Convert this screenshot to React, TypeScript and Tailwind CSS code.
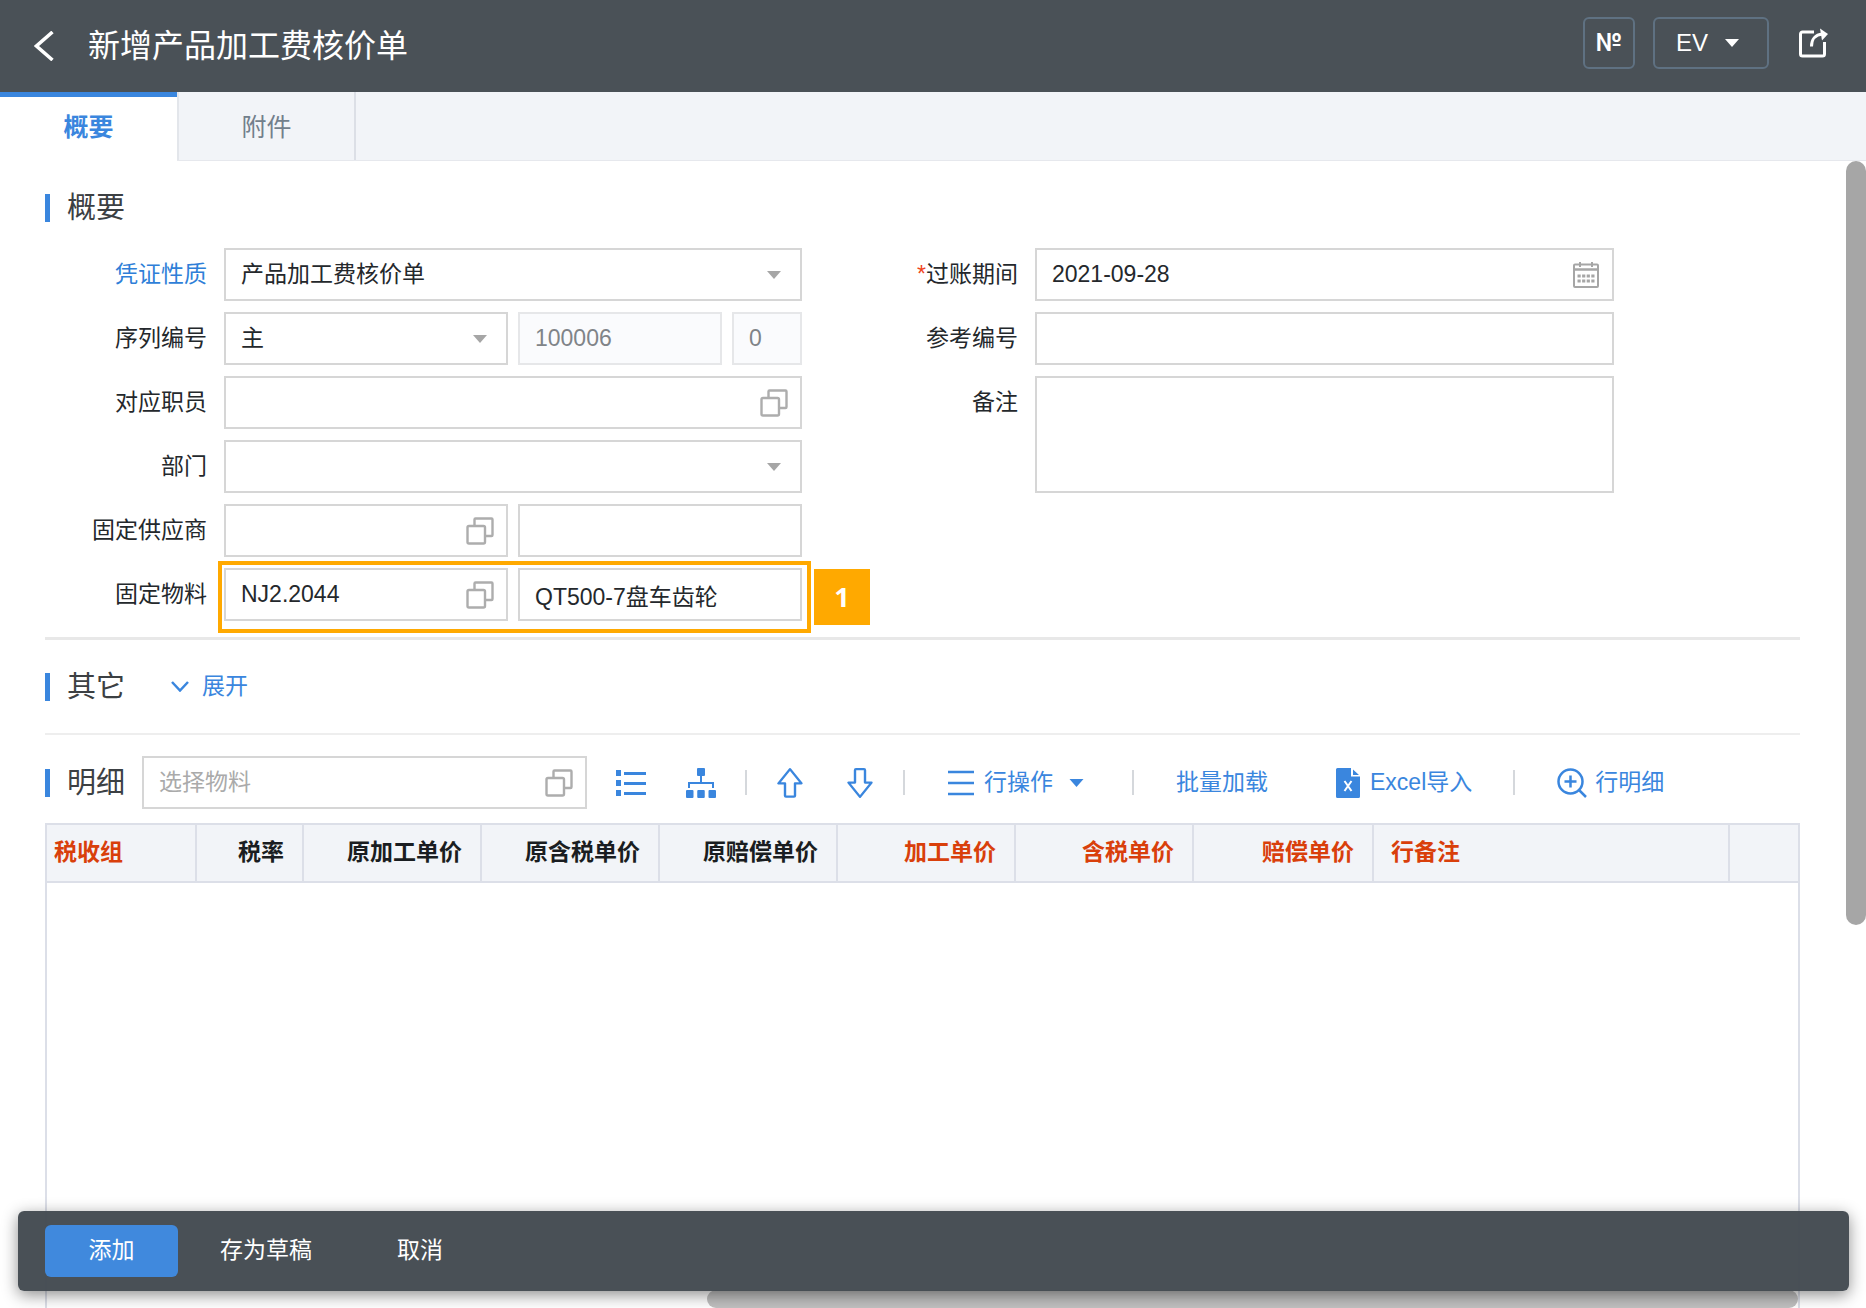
import type { InputHTMLAttributes, ReactNode, SelectHTMLAttributes } from "react";

interface IColumn {
  titulo: string;
  width: string;
  align: string;
  color: string;
}

const columns: IColumn[] = [
  { titulo: "税收组", width: "w-[149px]", align: "text-left pl-[7px]", color: "text-[#d93f0b]" },
  { titulo: "税率", width: "w-[107px]", align: "text-right pr-[18px]", color: "text-[#1a1d21]" },
  { titulo: "原加工单价", width: "w-[178px]", align: "text-right pr-[18px]", color: "text-[#1a1d21]" },
  { titulo: "原含税单价", width: "w-[178px]", align: "text-right pr-[18px]", color: "text-[#1a1d21]" },
  { titulo: "原赔偿单价", width: "w-[178px]", align: "text-right pr-[18px]", color: "text-[#1a1d21]" },
  { titulo: "加工单价", width: "w-[178px]", align: "text-right pr-[18px]", color: "text-[#d93f0b]" },
  { titulo: "含税单价", width: "w-[178px]", align: "text-right pr-[18px]", color: "text-[#d93f0b]" },
  { titulo: "赔偿单价", width: "w-[180px]", align: "text-right pr-[18px]", color: "text-[#d93f0b]" },
  { titulo: "行备注", width: "w-[356px]", align: "text-left pl-[17px]", color: "text-[#d93f0b]" },
  { titulo: "", width: "", align: "", color: "" },
];

const Caret = ({ className }: { className: string }) => (
  <svg viewBox="0 0 14 8" className={className} aria-hidden="true">
    <path d="M0 0h14L7 8z" fill="currentColor" />
  </svg>
);

const PopupIcon = () => (
  <svg viewBox="0 0 28 28" className="size-7" fill="none" stroke="#adadad" strokeWidth="2.4" aria-hidden="true">
    <path d="M8.500 9V2.500a1 1 0 0 1 1-1h16a1 1 0 0 1 1 1V18a1 1 0 0 1-1 1h-6" />
    <rect x="1.500" y="9" width="17.500" height="17.500" rx="1.500" />
  </svg>
);

const CalendarIcon = () => (
  <svg viewBox="0 0 28 28" className="size-7" fill="none" stroke="#a6a6a6" strokeWidth="2" aria-hidden="true">
    <rect x="2" y="3.500" width="24" height="22.500" rx="1" />
    <path d="M2 8.500h24" strokeWidth="2.500" />
    <path d="M8 1v5M20 1v5" />
    <path d="M5.500 15h17M5.500 20h17" strokeWidth="3" strokeDasharray="3.200 1.400" />
  </svg>
);

const Field = ({ label, id, link, required, children }: {
  label: string;
  id: string;
  link?: boolean;
  required?: boolean;
  children: ReactNode;
}) => (
  <div className="flex items-start">
    <label
      htmlFor={id}
      className={`w-[162px] shrink-0 pr-[17px] text-right leading-[52px] ${link ? "text-[#2f7fd8]" : ""}`}
    >
      {required && <span className="text-[#f0441c]">*</span>}
      {label}
    </label>
    <div className="relative flex min-w-0 flex-1 gap-[10px]">{children}</div>
  </div>
);

const TextField = ({ icon, className = "flex-1", ...props }: InputHTMLAttributes<HTMLInputElement> & { icon?: ReactNode }) => (
  <div className={`relative min-w-0 ${className}`}>
    <input
      {...props}
      className="h-[53px] w-full border-2 border-[#d6d6d6] bg-white px-[15px] outline-none placeholder:text-[#aaaaaa] disabled:border-[#e6e7e9] disabled:bg-[#fafbfd] disabled:text-[#808488]"
    />
    {icon && <span className="pointer-events-none absolute inset-y-0 right-[14px] flex items-center">{icon}</span>}
  </div>
);

const SelectField = ({ children, ...props }: SelectHTMLAttributes<HTMLSelectElement>) => (
  <div className="relative min-w-0 flex-1">
    <select
      {...props}
      className="h-[53px] w-full appearance-none border-2 border-[#d6d6d6] bg-white px-[15px] outline-none"
    >
      {children}
    </select>
    <span className="pointer-events-none absolute inset-y-0 right-[21px] flex items-center text-[#a6a6a6]">
      <Caret className="h-2 w-[14px]" />
    </span>
  </div>
);

const SectionTitle = ({ children }: { children: ReactNode }) => (
  <div className="flex items-center gap-[17px]">
    <span className="h-7 w-[5px] bg-[#3a86de]" />
    <h2 className="text-[29px] leading-9 text-[#3c4043]">{children}</h2>
  </div>
);

const Separator = () => <span className="h-[25px] w-[2px] bg-[#d5d8dc]" />;

const Header = () => (
  <header className="flex h-[92px] shrink-0 items-center bg-[#4a5157] pr-[38px] pl-[34px] text-white">
    <button type="button" aria-label="返回">
      <svg viewBox="0 0 20 30" className="h-[30px] w-5" fill="none" stroke="currentColor" strokeWidth="3.500">
        <path d="M18.500 1L2.500 15l16 14" />
      </svg>
    </button>
    <h1 className="ml-[34px] flex-1 text-[32px] leading-10">新增产品加工费核价单</h1>
    <div className="flex items-center pb-[6px]">
      <button
        type="button"
        className="size-[52px] rounded-md border-2 border-[#5f7182] font-['Inter',sans-serif] text-[24px] font-bold"
      >
        №
      </button>
      <button
        type="button"
        className="ml-[18px] flex h-[52px] w-[116px] items-center gap-4 rounded-md border-2 border-[#5f7182] pl-[21px] text-[24px]"
      >
        EV
        <Caret className="h-2 w-4" />
      </button>
      <button type="button" aria-label="分享" className="ml-[29px]">
        <svg viewBox="0 0 30 30" className="size-[30px]" fill="none" stroke="currentColor" strokeWidth="3" aria-hidden="true">
          <path d="M16 4H4.500a2 2 0 0 0-2 2v20a2 2 0 0 0 2 2h20a2 2 0 0 0 2-2V14" />
          <path d="M13.500 18.500c0-6.500 3.500-12 11-12.500" />
          <path d="M22 .5l8 5.500-6 6.500z" fill="currentColor" stroke="none" />
        </svg>
      </button>
    </div>
  </header>
);

const Tabs = () => (
  <nav className="flex h-[69px] shrink-0 border-b border-[#e6e8ed] bg-[#f2f4f8] text-[25px]">
    <button
      type="button"
      className="-mb-px w-[177px] border-t-[5px] border-[#3a86de] bg-white pb-[2px] font-bold text-[#3a86de]"
    >
      概要
    </button>
    <button type="button" className="w-[179px] border-x-2 border-l-[#e3e6eb] border-r-[#dcdfe6] pt-1 text-[#727f8c]">
      附件
    </button>
  </nav>
);

const Overview = () => (
  <section className="pt-[29px]">
    <SectionTitle>概要</SectionTitle>
    <div className="mt-[22px] flex gap-[71px]">
      <div className="ml-[17px] flex w-[740px] flex-col gap-[11px]">
        <Field label="凭证性质" id="tipo" link>
          <SelectField id="tipo">
            <option>产品加工费核价单</option>
          </SelectField>
        </Field>
        <Field label="序列编号" id="serie">
          <div className="flex w-[284px]">
            <SelectField id="serie">
              <option>主</option>
            </SelectField>
          </div>
          <TextField aria-label="编号" defaultValue="100006" disabled />
          <TextField aria-label="版本" defaultValue="0" disabled className="w-[70px]" />
        </Field>
        <Field label="对应职员" id="empleado">
          <TextField id="empleado" icon={<PopupIcon />} />
        </Field>
        <Field label="部门" id="departamento">
          <SelectField id="departamento" />
        </Field>
        <Field label="固定供应商" id="proveedor">
          <TextField id="proveedor" icon={<PopupIcon />} />
          <TextField aria-label="供应商名称" />
        </Field>
        <Field label="固定物料" id="material">
          <TextField id="material" defaultValue="NJ2.2044" icon={<PopupIcon />} />
          <TextField aria-label="物料名称" defaultValue="QT500-7盘车齿轮" />
          <div className="pointer-events-none absolute -top-[7px] -right-[9px] -bottom-[12px] -left-[6px] border-4 border-[#ffa900]" />
          <span className="absolute top-px left-full ml-3 flex size-14 items-center justify-center bg-[#ffa900] font-['Open_Sans','Noto_Sans',sans-serif] text-[27px] font-bold text-white">
            1
          </span>
        </Field>
      </div>
      <div className="flex w-[741px] flex-col gap-[11px]">
        <Field label="过账期间" id="fecha" required>
          <TextField id="fecha" defaultValue="2021-09-28" icon={<CalendarIcon />} />
        </Field>
        <Field label="参考编号" id="referencia">
          <TextField id="referencia" />
        </Field>
        <Field label="备注" id="notas">
          <textarea id="notas" className="h-[117px] flex-1 resize-none border-2 border-[#d6d6d6] px-[15px] outline-none" />
        </Field>
      </div>
    </div>
  </section>
);

const Toolbar = () => (
  <div className="flex items-center text-[#3a86de]">
    <button type="button" aria-label="列表" className="ml-[29px]">
      <svg viewBox="0 0 30 26" className="h-[26px] w-[30px]" fill="currentColor" aria-hidden="true">
        <path d="M0 0h5v6H0zM0 10h5v6H0zM0 20h5v6H0zM8 2h22v3H8zM8 12h22v3H8zM8 22h22v3H8z" />
      </svg>
    </button>
    <button type="button" aria-label="层级" className="mr-[29px] ml-10">
      <svg viewBox="0 0 30 30" className="size-[30px]" fill="currentColor" aria-hidden="true">
        <rect x="11" y="0" width="8" height="8" rx="1" />
        <rect x="0" y="22" width="7.500" height="8" rx="1" />
        <rect x="11.250" y="22" width="7.500" height="8" rx="1" />
        <rect x="22.500" y="22" width="7.500" height="8" rx="1" />
        <path d="M3 20v-5h24v5M15 7v8" fill="none" stroke="currentColor" strokeWidth="2" />
      </svg>
    </button>
    <Separator />
    <button type="button" aria-label="上移" className="ml-[30px]">
      <svg viewBox="0 0 26 36" className="h-9 w-[26px]" fill="none" stroke="currentColor" strokeWidth="2.400" strokeLinejoin="round" aria-hidden="true">
        <path d="M13 2.500L1.500 18H8v13.500a1 1 0 0 0 1 1h8a1 1 0 0 0 1-1V18h6.500z" transform="translate(0 1.800) scale(1 .92)" />
      </svg>
    </button>
    <button type="button" aria-label="下移" className="mr-[30px] ml-11">
      <svg viewBox="0 0 26 36" className="h-9 w-[26px]" fill="none" stroke="currentColor" strokeWidth="2.400" strokeLinejoin="round" aria-hidden="true">
        <path d="M13 33.500L1.500 18H8V4.500a1 1 0 0 1 1-1h8a1 1 0 0 1 1 1V18h6.500z" transform="translate(0 1) scale(1 .92)" />
      </svg>
    </button>
    <Separator />
    <button type="button" className="mr-12 ml-[43px] flex items-center">
      <svg viewBox="0 0 26 26" className="mr-[10px] size-[26px]" stroke="currentColor" strokeWidth="2.500" aria-hidden="true">
        <path d="M0 2h26M0 13h26M0 24h26" />
      </svg>
      行操作
      <Caret className="ml-4 h-2 w-[15px]" />
    </button>
    <Separator />
    <button type="button" className="ml-[42px]">
      批量加载
    </button>
    <button type="button" className="mr-[41px] ml-[68px] flex items-center">
      <svg viewBox="0 0 24 30" className="mr-[10px] h-[30px] w-6" aria-hidden="true">
        <path d="M1.500 0H15v8.500h9v20a1.500 1.500 0 0 1-1.500 1.500h-21A1.500 1.500 0 0 1 0 28.500v-27A1.500 1.500 0 0 1 1.500 0zM17 1.500l6 5.500h-6z" fill="currentColor" />
        <path d="M8.500 13l7 10M15.500 13l-7 10" stroke="#fff" strokeWidth="2" />
      </svg>
      Excel导入
    </button>
    <Separator />
    <button type="button" className="ml-[42px] flex items-center">
      <svg viewBox="0 0 30 30" className="mr-2 size-[30px]" fill="none" stroke="currentColor" strokeWidth="2.500" aria-hidden="true">
        <circle cx="13.500" cy="13.500" r="12" />
        <path d="M22 22l7 7M7.500 13.500h12M13.500 7.500v12" />
      </svg>
      行明细
    </button>
  </div>
);

const Details = () => (
  <section className="flex min-h-0 flex-1 flex-col">
    <div className="flex h-[88px] items-center pt-[7px]">
      <SectionTitle>明细</SectionTitle>
      <TextField aria-label="选择物料" placeholder="选择物料" icon={<PopupIcon />} className="ml-[17px] w-[445px]" />
      <Toolbar />
    </div>
    <div className="relative flex-1 border-x-2 border-[#dcdfe8]">
      <table className="w-full table-fixed border-collapse">
        <thead>
          <tr className="h-[58px] border-y-2 border-[#dcdfe8] bg-[#f2f4f8]">
            {columns.map((column, index) => (
              <th
                key={index}
                className={`border-r-2 border-[#dcdfe8] pb-[2px] font-bold last:border-r-0 ${column.width} ${column.align} ${column.color}`}
              >
                {column.titulo}
              </th>
            ))}
          </tr>
        </thead>
        <tbody />
      </table>
      <div className="absolute right-0 bottom-0 h-[18px] w-[1091px] rounded-full bg-[#c0c0c0]" />
    </div>
  </section>
);

const Footer = () => (
  <footer className="absolute right-[17px] bottom-[17px] left-[18px] flex h-20 items-center rounded-md bg-[#434a51]/97 pl-[27px] text-white shadow-[0_4px_16px_rgba(0,0,0,0.45)]">
    <button type="button" className="h-[52px] w-[133px] rounded-md bg-[#4089dd] pb-[2px]">
      添加
    </button>
    <button type="button" className="h-[52px] w-[176px] pb-[2px]">
      存为草稿
    </button>
    <button type="button" className="h-[52px] w-[132px] pb-[2px]">
      取消
    </button>
  </footer>
);

const App = () => {
  return (
    <div className="relative flex h-screen flex-col overflow-hidden bg-white font-['Liberation_Sans','Noto_Sans_CJK_SC',sans-serif] text-[23px] text-[#24282c]">
      <Header />
      <Tabs />
      <main className="relative flex min-h-0 flex-1 flex-col pr-[66px] pl-[45px]">
        <Overview />
        <section className="mt-4 flex h-[98px] items-center gap-[46px] border-t-[3px] border-b-2 border-t-[#e8e8e8] border-b-[#eeeeee]">
          <SectionTitle>其它</SectionTitle>
          <button type="button" className="flex items-center gap-[13px] text-[#3a86de]">
            <svg viewBox="0 0 18 11" className="h-[11px] w-[18px]" fill="none" stroke="currentColor" strokeWidth="2.500" aria-hidden="true">
              <path d="M1 1l8 8.500L17 1" />
            </svg>
            展开
          </button>
        </section>
        <Details />
        <div className="absolute top-0 right-0 h-[764px] w-5 rounded-full bg-[#a6a6a6]" />
      </main>
      <Footer />
    </div>
  );
};

export default App;
